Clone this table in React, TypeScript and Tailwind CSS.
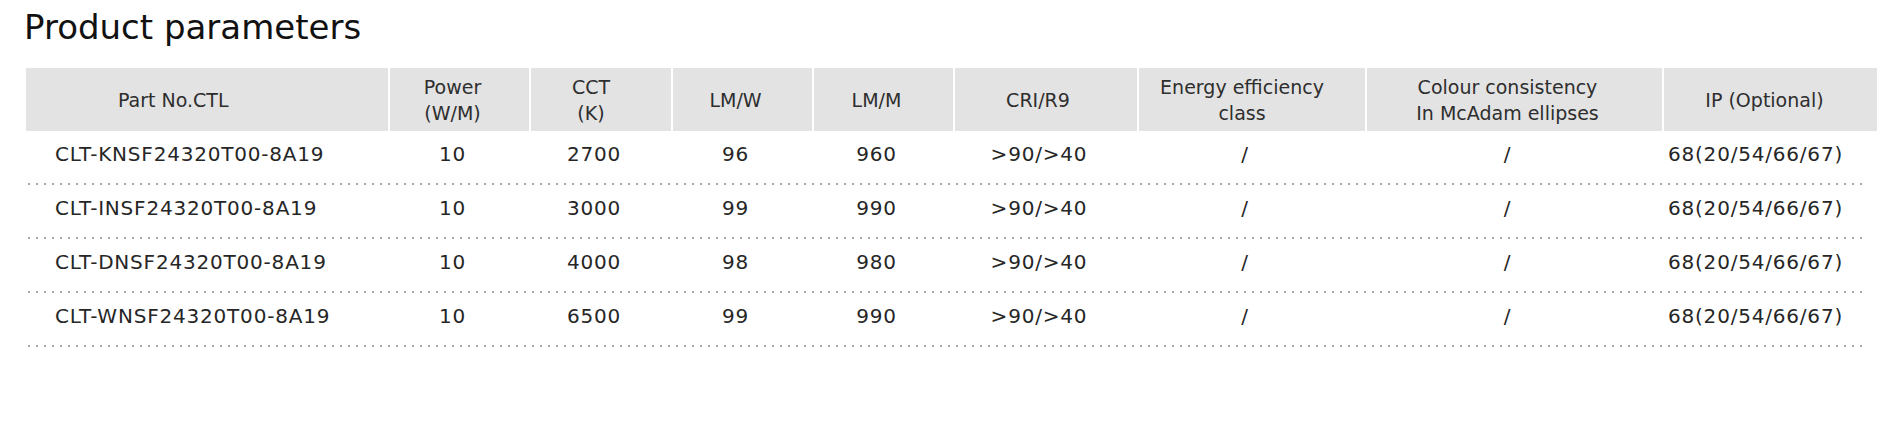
import React from "react";

const cols = "grid grid-cols-[362px_139px_140px_139px_139px_182px_226px_295px_213px] gap-x-[2px]";

const rows = [
  ["CLT-KNSF24320T00-8A19", "10", "2700", "96", "960", ">90/>40", "/", "/", "68(20/54/66/67)"],
  ["CLT-INSF24320T00-8A19", "10", "3000", "99", "990", ">90/>40", "/", "/", "68(20/54/66/67)"],
  ["CLT-DNSF24320T00-8A19", "10", "4000", "98", "980", ">90/>40", "/", "/", "68(20/54/66/67)"],
  ["CLT-WNSF24320T00-8A19", "10", "6500", "99", "990", ">90/>40", "/", "/", "68(20/54/66/67)"],
];

export default function App() {
  return (
    <div className="min-h-[441px] w-[1903px] bg-white text-[#262626] [font-family:'DejaVu_Sans',sans-serif]">
      <h1 className="pl-[24px] pt-[7px] text-[34px] leading-[40px] font-normal text-[#111]">
        Product parameters
      </h1>
      <div className="ml-[26px] mt-[21px] w-[1851px]">
        <div className={`${cols} h-[63px] bg-white text-[19px] leading-[26px] text-[#2e2e2e]`}>
          <div className="flex items-center bg-[#e3e3e3] pl-[92px]">Part No.CTL</div>
          <div className="flex items-center justify-center bg-[#e3e3e3] pr-[14px] text-center">
            Power<br />(W/M)
          </div>
          <div className="flex items-center justify-center bg-[#e3e3e3] pr-[20px] text-center">
            CCT<br />(K)
          </div>
          <div className="flex items-center justify-center bg-[#e3e3e3] pr-[14px]">LM/W</div>
          <div className="flex items-center justify-center bg-[#e3e3e3] pr-[14px]">LM/M</div>
          <div className="flex items-center justify-center bg-[#e3e3e3] pr-[16px]">CRI/R9</div>
          <div className="flex items-center justify-center bg-[#e3e3e3] pr-[20px] text-center">
            Energy efficiency<br />class
          </div>
          <div className="flex items-center justify-center bg-[#e3e3e3] pr-[14px] text-center">
            Colour consistency<br />In McAdam ellipses
          </div>
          <div className="flex items-center justify-center bg-[#e3e3e3] pr-[12px]">IP (Optional)</div>
        </div>
        {rows.map((r, i) => (
          <div key={i}>
            <div className={`${cols} h-[52px] pb-[6px] text-[20px] leading-[26px] tracking-[0.8px]`}>
              <div className="flex items-center pl-[29px]">{r[0]}</div>
              {r.slice(1, 8).map((c, j) => (
                <div key={j} className="flex items-center justify-center pr-[14px]">
                  {c}
                </div>
              ))}
              <div className="flex items-center justify-center pr-[30px]">{r[8]}</div>
            </div>
            <div className="ml-[2px] mr-[9px] h-[2px] bg-[linear-gradient(90deg,#a9a9a9_2px,transparent_2px)] bg-[length:8px_2px]" />
          </div>
        ))}
      </div>
    </div>
  );
}
